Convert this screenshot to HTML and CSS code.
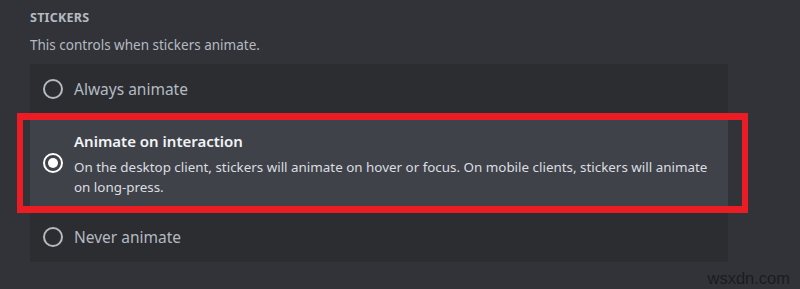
FILE: index.html
```html
<!DOCTYPE html>
<html lang="en">
<head>
    <meta charset="UTF-8">
    <meta name="viewport" content="width=device-width, initial-scale=1.0">
    <title>Stickers setting</title>
    <link rel="stylesheet" href="styles.css">
</head>
<body>
    <main class="settings">
        <!-- Stickers Section -->
        <section class="sticker-section">
            <h5 class="section-title">Stickers</h5>
            <p class="section-note">This controls when stickers animate.</p>

            <div class="radio-group" role="radiogroup">
                <div class="radio-item">
                    <span class="radio"></span>
                    <div class="radio-text">
                        <div class="radio-label">Always animate</div>
                    </div>
                </div>

                <div class="radio-item selected">
                    <span class="radio"></span>
                    <div class="radio-text">
                        <div class="radio-label">Animate on interaction</div>
                        <div class="radio-desc">On the desktop client, stickers will animate on hover or focus. On mobile clients, stickers will animate on long-press.</div>
                    </div>
                </div>

                <div class="radio-item">
                    <span class="radio"></span>
                    <div class="radio-text">
                        <div class="radio-label">Never animate</div>
                    </div>
                </div>
            </div>
        </section>

        <!-- annotation box drawn over the selected option -->
        <div class="highlight"></div>
    </main>

    <span class="watermark">wsxdn.com</span>
</body>
</html>
```

FILE: styles.css
```css
/* Discord-like settings */
:root {
    --bg-color: #313338;
    --panel-color: #2b2d31;
    --selected-color: #404249;
    --muted-text: #b5bac1;
    --mark-red: #ec1c24;
}

* {
    box-sizing: border-box;
    margin: 0;
    padding: 0;
}

body {
    font-family: 'Noto Sans', 'Open Sans', sans-serif;
    background-color: var(--bg-color);
    height: 289px;
    overflow: hidden;
    position: relative;
}

.settings {
    position: relative;
    padding: 11px 72px 0 30px;
}

.section-title {
    color: var(--muted-text);
    font-size: 12.5px;
    font-weight: 700;
    text-transform: uppercase;
    letter-spacing: 0.02em;
    line-height: 14px;
}

.section-note {
    color: var(--muted-text);
    font-size: 13.5px;
    line-height: 20px;
    margin-top: 10px;
}

/* Radio options */
.radio-group {
    margin-top: 9px;
    background: var(--panel-color);
    width: 698px;
}

.radio-item {
    display: flex;
    align-items: center;
    gap: 11px;
    padding: 0 0 0 13px;
    height: 50px;
}

.radio-item.selected {
    background: var(--selected-color);
    height: 98px;
}

.radio {
    width: 20px;
    height: 20px;
    flex-shrink: 0;
    border: 2px solid var(--muted-text);
    border-radius: 50%;
    display: flex;
    align-items: center;
    justify-content: center;
}

.selected .radio {
    border-color: #ffffff;
}

.selected .radio::after {
    content: '';
    width: 10px;
    height: 10px;
    border-radius: 50%;
    background: #ffffff;
}

.radio-label {
    color: var(--muted-text);
    font-size: 15.5px;
    line-height: 22px;
}

.selected .radio-label {
    color: #f2f3f5;
    font-weight: 600;
    font-size: 15px;
}

.radio-desc {
    color: #dbdee1;
    font-size: 13.4px;
    line-height: 20px;
    margin-top: 5px;
    padding-right: 14px;
}

.highlight {
    position: absolute;
    left: 17px;
    top: 113px;
    width: 731px;
    height: 100px;
    border: 7px solid var(--mark-red);
    border-left-width: 6px;
    border-right-width: 6px;
}

.watermark {
    position: absolute;
    right: 10px;
    bottom: 1px;
    color: #1b1c1f;
    font-family: 'Liberation Sans', sans-serif;
    font-size: 16.5px;
}
```
